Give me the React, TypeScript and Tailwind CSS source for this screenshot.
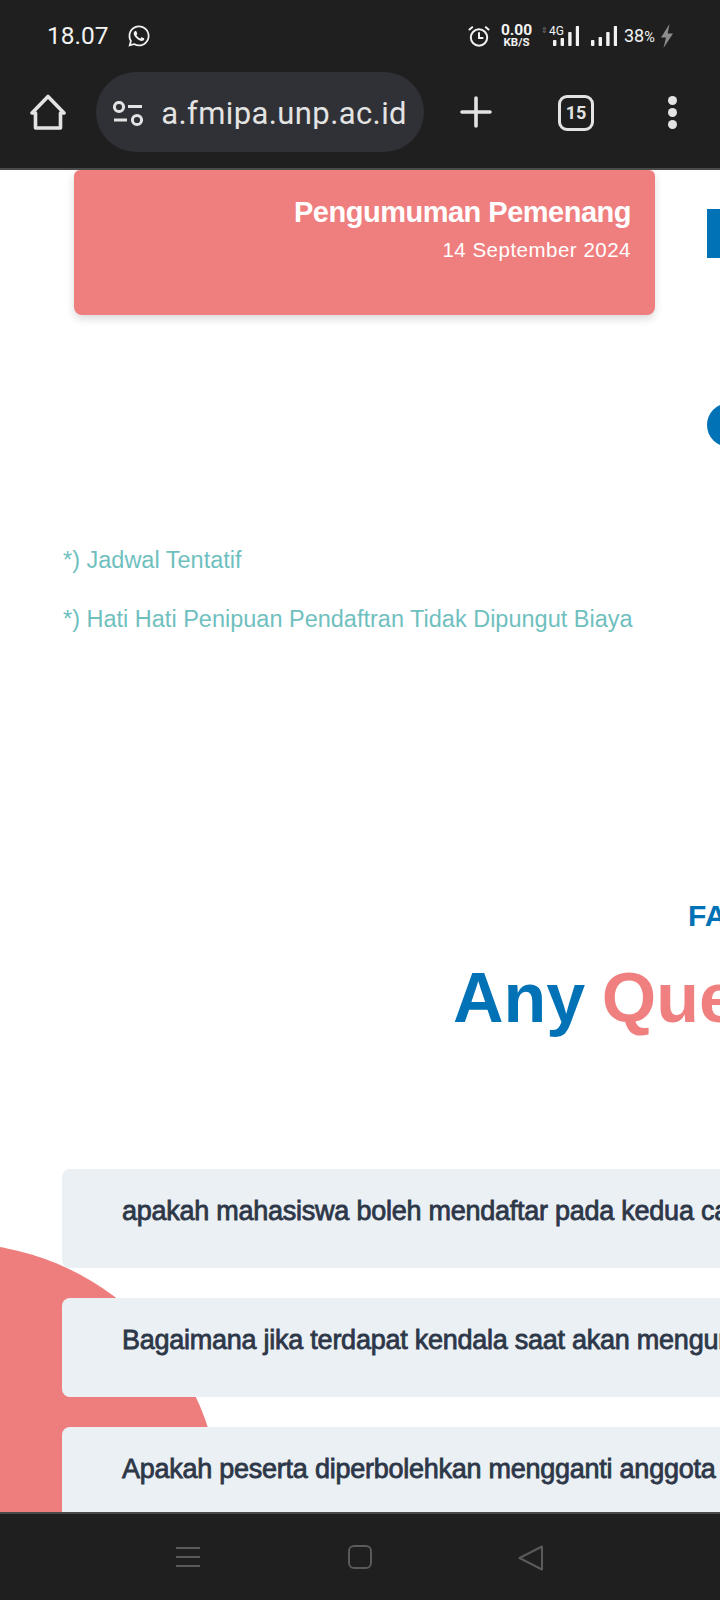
import React from "react";
import { FaWhatsapp } from "react-icons/fa";

const sans = { fontFamily: '"Liberation Sans", Arial, sans-serif' };

function Signal({ bars }: { bars: number[] }) {
  return (
    <svg width="26" height="21" viewBox="0 0 26 21" fill="#f2f2f2">
      {bars.map((h, i) => (
        <rect key={i} x={i * 7.6} y={20 - h} width="3.4" height={h} rx="0.8" />
      ))}
    </svg>
  );
}

function StatusBar() {
  return (
    <div className="flex h-[72px] items-center pl-[47px] pr-[46px] font-['Roboto',sans-serif] text-[#f2f2f2]">
      <span className="text-[24.5px] leading-none">18.07</span>
      <FaWhatsapp className="ml-[18px] text-[24px]" />
      <div className="ml-auto flex items-center">
        <svg width="22" height="22" viewBox="0 0 22 22" fill="none" stroke="#f2f2f2" strokeWidth="2" strokeLinecap="round">
          <circle cx="11" cy="12.5" r="8.2" />
          <path d="M11 8v5h3.6M1.5 4.5 4.2 2.2M20.5 4.5l-2.7-2.3" />
        </svg>
        <div className="ml-[10px] flex w-[33px] flex-col items-center font-bold leading-none">
          <span className="text-[15.5px] leading-[13px]">0.00</span>
          <span className="text-[11.5px] leading-[11px]">KB/S</span>
        </div>
        <div className="relative ml-[20px] flex">
          <Signal bars={[6, 8, 14, 20]} />
          <span className="absolute left-[-4px] top-[-1px] text-[12px] leading-[13px]">4G</span>
          <span className="absolute left-[-12px] top-[1px] text-[8px] leading-[8px] text-[#777]">⇕</span>
        </div>
        <span className="ml-[12px] flex">
          <Signal bars={[6, 9, 14, 20]} />
        </span>
        <span className="ml-[7px] w-[33px] whitespace-nowrap text-[18px] leading-none">
          38<span className="text-[14.5px]">%</span>
        </span>
        <svg className="ml-[3px]" width="14" height="24" viewBox="0 0 14 24" fill="#8c8c8c">
          <path d="M9.5 0 1 13.5h5L3.5 24 13 9.5H7.7z" />
        </svg>
      </div>
    </div>
  );
}

function Toolbar() {
  return (
    <div className="flex h-[96px] items-start text-[#e3e3e3]">
      <svg className="ml-[30px] mt-[22px]" width="36" height="36" viewBox="0 0 36 36" fill="none" stroke="#e3e3e3" strokeWidth="3.6" strokeLinejoin="round" strokeLinecap="round">
        <path d="M2 19 18 2.5 34 19h-3.5v15h-25V19z" />
      </svg>
      <div className="ml-[30px] flex h-[80px] w-[328px] items-center rounded-[40px] bg-[#303136] pl-[16px] pr-[17px]">
        <svg className="mt-[3px]" width="32" height="26" viewBox="0 0 32 26" fill="none" stroke="#e3e3e3" strokeWidth="3">
          <circle cx="7" cy="6" r="4.6" />
          <path d="M16 5.5h14M2 19h13" />
          <circle cx="25" cy="19" r="4.6" />
        </svg>
        <div className="ml-[16px] flex min-w-0 flex-1 justify-end overflow-hidden pt-[2px]">
          <span className="whitespace-nowrap font-['Roboto',sans-serif] text-[31px] leading-none tracking-[0.4px]">ta.fmipa.unp.ac.id</span>
        </div>
      </div>
      <svg className="ml-[36px] mt-[24px]" width="32" height="32" viewBox="0 0 32 32" stroke="#e3e3e3" strokeWidth="3.6" strokeLinecap="round">
        <path d="M16 2v28M2 16h28" />
      </svg>
      <div className="ml-[66px] mt-[23px] flex h-[36px] w-[36px] items-center justify-center rounded-[9px] border-[3.5px] border-[#e3e3e3] font-['Roboto',sans-serif] text-[18px] font-bold leading-none">
        15
      </div>
      <div className="ml-[74px] mt-[24px] flex flex-col gap-[3px]">
        <span className="h-[9px] w-[9px] rounded-full bg-[#e3e3e3]" />
        <span className="h-[9px] w-[9px] rounded-full bg-[#e3e3e3]" />
        <span className="h-[9px] w-[9px] rounded-full bg-[#e3e3e3]" />
      </div>
    </div>
  );
}

function Faq({ text }: { text: string }) {
  return (
    <div className="h-[99px] w-[900px] shrink-0 rounded-[8px] bg-[#ebf0f5] pl-[60px] pt-[24px]">
      <p className="whitespace-nowrap text-[27px] font-medium leading-[36px] tracking-[-0.25px] text-[#2d3748] [-webkit-text-stroke:0.8px_#2d3748]">{text}</p>
    </div>
  );
}

export default function App() {
  return (
    <div className="flex h-[1600px] w-[720px] flex-col overflow-hidden bg-white" style={sans}>
      <header className="h-[170px] shrink-0 border-b-2 border-[#4a4a4a] bg-[#1f1f1f]">
        <StatusBar />
        <Toolbar />
      </header>

      <main className="relative min-h-0 flex-1 overflow-hidden">
        <div className="absolute left-[-313px] top-[1073px] h-[534px] w-[534px] rounded-full bg-[#ee7e7e]" />

        <div className="relative flex items-start pl-[74px]">
          <div className="h-[145px] w-[581px] shrink-0 rounded-b-[8px] rounded-t-[6px] bg-[#ef7e7e] pr-[24px] pt-[25px] text-right text-white shadow-[0_4px_8px_rgba(0,0,0,0.15)]">
            <h3 className="whitespace-nowrap text-[29px] font-bold leading-[34px] tracking-[-0.5px]">Pengumuman Pemenang</h3>
            <p className="mt-[9px] text-[20.5px] leading-[24px] tracking-[0.5px]">14 September 2024</p>
          </div>
          <div className="ml-[52px] flex shrink-0 flex-col pt-[39px]">
            <div className="h-[49px] w-[60px] bg-[#0072b5]" />
            <div className="mt-[145px] h-[44px] w-[44px] rounded-full bg-[#0072b5]" />
          </div>
        </div>

        <div className="relative ml-[63px] mt-[98px] text-[23.5px] leading-[30px] text-[#6fbfbf]">
          <p>*) Jadwal Tentatif</p>
          <p className="mt-[29px] whitespace-nowrap">*) Hati Hati Penipuan Pendaftran Tidak Dipungut Biaya</p>
        </div>

        <div className="relative mt-[264px] pl-[688px] text-[30px] font-bold leading-[36px] text-[#0072b5]">FAQ</div>
        <h2 className="relative mt-[22px] whitespace-nowrap pl-[453px] text-[70px] font-bold leading-[84px] text-[#0072b5] [word-spacing:-3px]">
          Any <span className="text-[#f08080]">Questions?</span>
        </h2>

        <div className="relative ml-[62px] mt-[129px] flex w-[900px] flex-col gap-[30px]">
          <Faq text="apakah mahasiswa boleh mendaftar pada kedua cabang lomba?" />
          <Faq text="Bagaimana jika terdapat kendala saat akan mengumpulkan berkas?" />
          <Faq text="Apakah peserta diperbolehkan mengganti anggota tim?" />
        </div>
      </main>

      <footer className="flex h-[88px] shrink-0 items-start border-t-2 border-[#4a4a4a] bg-[#1f1f1f] pt-[31px]">
        <svg className="ml-[176px]" width="24" height="24" viewBox="0 0 24 24" stroke="#5a5a5a" strokeWidth="2">
          <path d="M0 3h24M0 12h24M0 21h24" />
        </svg>
        <svg className="ml-[148px]" width="24" height="24" viewBox="0 0 24 24" fill="none" stroke="#5a5a5a" strokeWidth="2">
          <rect x="1" y="1" width="22" height="22" rx="5" />
        </svg>
        <svg className="ml-[146px]" width="26" height="26" viewBox="0 0 26 26" fill="none" stroke="#5a5a5a" strokeWidth="2" strokeLinejoin="round">
          <path d="M24 1.5v23L1.5 13z" />
        </svg>
      </footer>
    </div>
  );
}
